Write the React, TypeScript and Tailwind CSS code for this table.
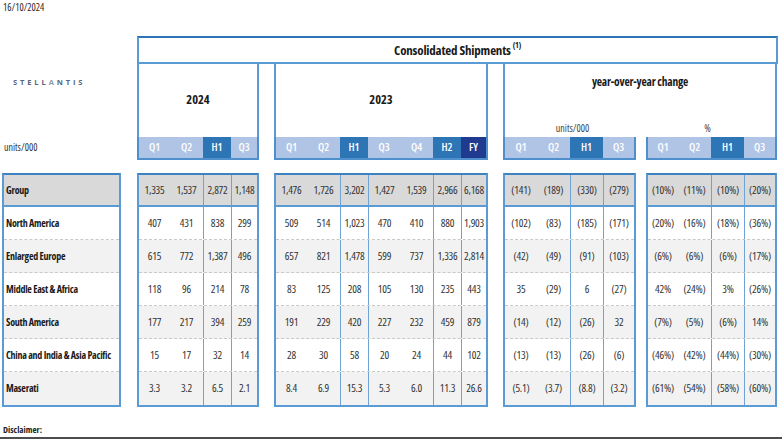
import React from "react";

type Col = { w: string; sep?: boolean; kind?: "q" | "h" | "fy" };

const C24: Col[] = [
  { w: "w-[31px]", kind: "q" },
  { w: "w-[33px]", kind: "q" },
  { w: "w-[28px]", sep: true, kind: "h" },
  { w: "w-[26px]", sep: true, kind: "q" },
];
const C23: Col[] = [
  { w: "w-[31px]", kind: "q" },
  { w: "w-[33px]", kind: "q" },
  { w: "w-[28px]", sep: true, kind: "h" },
  { w: "w-[32px]", sep: true, kind: "q" },
  { w: "w-[33px]", kind: "q" },
  { w: "w-[28px]", sep: true, kind: "h" },
  { w: "w-[25px]", sep: true, kind: "fy" },
];
const CY: Col[] = [
  { w: "w-[32px]", kind: "q" },
  { w: "w-[33px]", kind: "q" },
  { w: "w-[33px]", sep: true, kind: "h" },
  { w: "w-[31px]", sep: true, kind: "q" },
];
const CP: Col[] = [
  { w: "w-[30px]", kind: "q" },
  { w: "w-[33px]", kind: "q" },
  { w: "w-[33px]", sep: true, kind: "h" },
  { w: "w-[31px]", sep: true, kind: "q" },
];

const L24 = ["Q1", "Q2", "H1", "Q3"];
const L23 = ["Q1", "Q2", "H1", "Q3", "Q4", "H2", "FY"];

const labels = [
  "Group",
  "North America",
  "Enlarged Europe",
  "Middle East & Africa",
  "South America",
  "China and India & Asia Pacific",
  "Maserati",
];

const d24 = [
  ["1,335", "1,537", "2,872", "1,148"],
  ["407", "431", "838", "299"],
  ["615", "772", "1,387", "496"],
  ["118", "96", "214", "78"],
  ["177", "217", "394", "259"],
  ["15", "17", "32", "14"],
  ["3.3", "3.2", "6.5", "2.1"],
];
const d23 = [
  ["1,476", "1,726", "3,202", "1,427", "1,539", "2,966", "6,168"],
  ["509", "514", "1,023", "470", "410", "880", "1,903"],
  ["657", "821", "1,478", "599", "737", "1,336", "2,814"],
  ["83", "125", "208", "105", "130", "235", "443"],
  ["191", "229", "420", "227", "232", "459", "879"],
  ["28", "30", "58", "20", "24", "44", "102"],
  ["8.4", "6.9", "15.3", "5.3", "6.0", "11.3", "26.6"],
];
const dy = [
  ["(141)", "(189)", "(330)", "(279)"],
  ["(102)", "(83)", "(185)", "(171)"],
  ["(42)", "(49)", "(91)", "(103)"],
  ["35", "(29)", "6", "(27)"],
  ["(14)", "(12)", "(26)", "32"],
  ["(13)", "(13)", "(26)", "(6)"],
  ["(5.1)", "(3.7)", "(8.8)", "(3.2)"],
];
const dp = [
  ["(10%)", "(11%)", "(10%)", "(20%)"],
  ["(20%)", "(16%)", "(18%)", "(36%)"],
  ["(6%)", "(6%)", "(6%)", "(17%)"],
  ["42%", "(24%)", "3%", "(26%)"],
  ["(7%)", "(5%)", "(6%)", "14%"],
  ["(46%)", "(42%)", "(44%)", "(30%)"],
  ["(61%)", "(54%)", "(58%)", "(60%)"],
];

function rowClass(i: number) {
  if (i === 0) return "h-[32px] bg-[#d9d9d9] border-b-2 border-[#5b9bd5]";
  const bg = i % 2 === 0 ? "bg-[#f2f2f2]" : "bg-white";
  const last = i === 6;
  return `h-[33px] ${bg} ${last ? "" : "border-b border-dashed border-[#c9c9c9]"}`;
}

function QRow({ cols, labels, w }: { cols: Col[]; labels: string[]; w: string }) {
  return (
    <div className={`${w} h-[23px] flex border-x-2 border-b-2 border-[#4f8fcc]`}>
      {cols.map((c, i) => (
        <div
          key={i}
          className={`${c.w} h-full flex items-center justify-center text-white font-semibold text-[11px] ${
            c.kind === "h" ? "bg-[#2e75b6]" : c.kind === "fy" ? "bg-[#1f3a8f]" : "bg-[#b0c5e6]"
          }`}
        >
          {labels[i]}
        </div>
      ))}
    </div>
  );
}

function DataBox({ cols, data, w }: { cols: Col[]; data: string[][]; w: string }) {
  return (
    <div className={`${w} flex flex-col border-2 border-[#5b9bd5] border-t-[#3f82c2]`}>
      {data.map((row, ri) => (
        <div key={ri} className={`flex ${rowClass(ri)}`}>
          {cols.map((c, ci) => (
            <div
              key={ci}
              className={`${c.w} h-full flex items-center justify-center text-[11px] tracking-[-0.2px] text-[#333] ${
                c.sep ? "border-l border-[#6fa3d6]" : ""
              }`}
            >
              {row[ci]}
            </div>
          ))}
        </div>
      ))}
    </div>
  );
}

export default function App() {
  return (
    <div className="w-[782px] h-[440px] bg-white overflow-hidden flex flex-col text-[#1a1a1a] font-['Open_Sans',sans-serif] [font-stretch:75%]">
      <div className="pl-[3px] pt-[1px] h-[14px] text-[10px] leading-[12px] text-[#2a2a2a]">16/10/2024</div>

      {/* header */}
      <div className="mt-[22px] flex pl-[2px]">
        <div className="w-[119px] mr-[16px] h-[124px] flex flex-col">
          <div className="mt-[42px] pl-[11px] h-[10px] flex items-center text-[7.5px] font-bold tracking-[2.9px] text-[#56677e] leading-none [font-stretch:100%]">
            STELL<span className="text-[#8d9bb0]">A</span>NTIS
          </div>
          <div className="mt-auto mb-[7px] pl-[2px] text-[10px] leading-[12px] text-[#333]">units/000</div>
        </div>

        <div className="w-[641px] flex flex-col">
          <div className="h-[28px] border-2 border-[#5b9bd5] border-t-[#2e75b6] flex items-center justify-center">
            <span className="flex items-start text-[13px] font-bold leading-none tracking-[-0.2px]">
              <span>Consolidated Shipments</span>
              <span className="text-[8px] ml-[2px] -mt-[3px] leading-none">(1)</span>
            </span>
          </div>
          <div className="flex h-[96px]">
            <div className="w-[122px] flex flex-col">
              <div className="flex-1 border-x-2 border-[#5b9bd5] flex items-center justify-center text-[12.5px] font-bold">
                2024
              </div>
              <QRow cols={C24} labels={L24} w="w-[122px]" />
            </div>
            <div className="w-[214px] ml-[15px] flex flex-col">
              <div className="flex-1 border-x-2 border-[#5b9bd5] flex items-center justify-center text-[12.5px] font-bold">
                2023
              </div>
              <QRow cols={C23} labels={L23} w="w-[214px]" />
            </div>
            <div className="w-[274px] ml-[15px] flex flex-col">
              <div className="flex-1 border-x-2 border-[#5b9bd5] flex flex-col">
                <div className="pt-[10px] text-center text-[11.5px] font-bold leading-[16px] tracking-[-0.2px]">year-over-year change</div>
                <div className="mt-auto pb-[3px] flex text-[10px] leading-[12px] text-[#444]">
                  <div className="w-[137px] text-center">units/000</div>
                  <div className="w-[137px] text-center">%</div>
                </div>
              </div>
              <div className="flex gap-[10px]">
                <QRow cols={CY} labels={L24} w="w-[133px]" />
                <QRow cols={CP} labels={L24} w="w-[131px]" />
              </div>
            </div>
          </div>
        </div>
      </div>

      {/* data */}
      <div className="mt-[13px] flex pl-[2px]">
        <div className="w-[119px] mr-[16px] flex flex-col border-2 border-[#5b9bd5] border-t-[#3f82c2]">
          {labels.map((l, i) => (
            <div key={i} className={`flex items-center pl-[2px] text-[10px] tracking-[-0.25px] font-bold whitespace-nowrap ${rowClass(i)}`}>
              {l}
            </div>
          ))}
        </div>
        <DataBox cols={C24} data={d24} w="w-[122px]" />
        <div className="ml-[15px]">
          <DataBox cols={C23} data={d23} w="w-[214px]" />
        </div>
        <div className="ml-[15px]">
          <DataBox cols={CY} data={dy} w="w-[133px]" />
        </div>
        <div className="ml-[10px]">
          <DataBox cols={CP} data={dp} w="w-[131px]" />
        </div>
      </div>

      <div className="mt-auto">
        <div className="pl-[3px] text-[9px] font-bold leading-[10px] text-[#222]">Disclaimer:</div>
        <div className="mt-[2px] h-[2px] bg-[#4d4d4d]" />
        <div className="h-[1px]" />
      </div>
    </div>
  );
}
